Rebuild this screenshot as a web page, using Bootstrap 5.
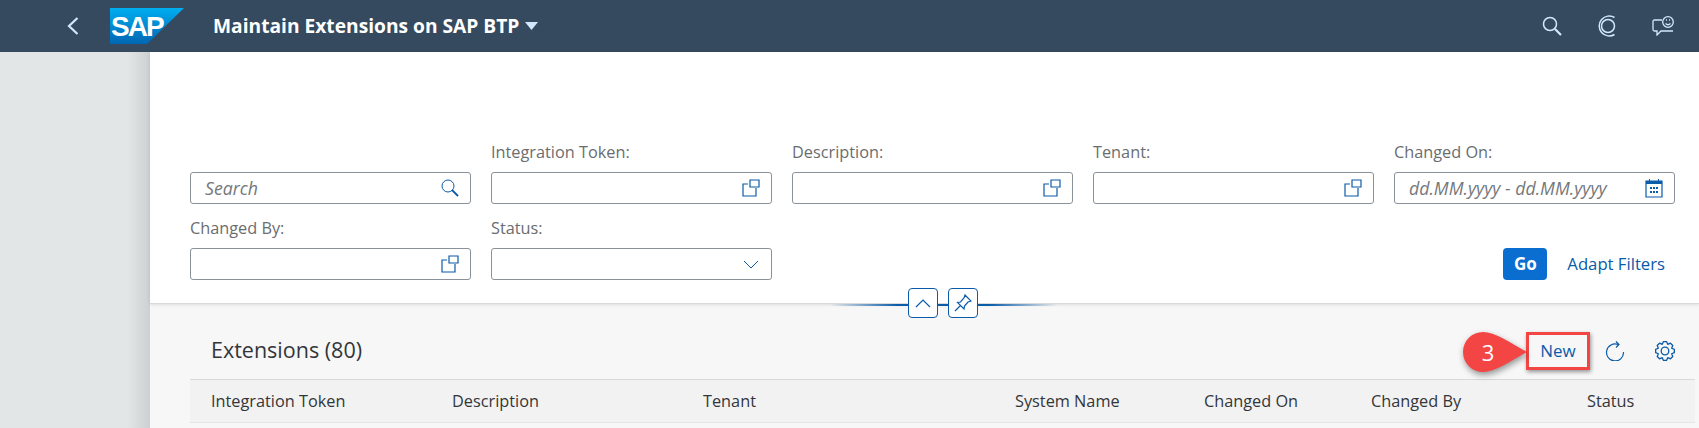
<!DOCTYPE html>
<html lang="en">
<head>
  <meta charset="UTF-8">
  <title>Maintain Extensions on SAP BTP</title>
  <link href="https://cdn.jsdelivr.net/npm/bootstrap@5.3.0/dist/css/bootstrap.min.css" rel="stylesheet">
  <style>
    html, body { height: 100%; overflow: hidden; }
    body { font-family: "Open Sans", "Liberation Sans", sans-serif; font-size: 16px; background: #f7f7f7; color: #32363a; }
    .shell-bar { height: 52px; background: #354a5f; padding: 0; }
    .shell-back { width: 12px; margin-left: 67px; margin-right: 31px; }
    .shell-title { color: #fff; font-size: 19.200px; font-weight: 700; margin-left: 29px; }
    .shell-caret { margin-left: 6px; }
    .shell-tools { margin-left: auto; margin-right: 25px; gap: 35px; }
    .side-rail { width: 150px; flex: none; background: linear-gradient(to right, #e3e6e6 85%, #ccd0d0); }
    .page-body { min-width: 0; }
    .filter-panel { height: 252px; background: #fff; padding: 76px 24px 0 40px; border-bottom: 1px solid #d9d9d9; box-shadow: 0 1px 3px rgba(0,0,0,.1); }
    .filter-grid { display: grid; grid-template-columns: repeat(5, 281px); column-gap: 20px; }
    .filter-cell { height: 76px; display: flex; flex-direction: column; justify-content: flex-end; }
    .filter-label { color: #6a6d70; font-size: 16.300px; line-height: 20px; margin-bottom: 10px; }
    .filter-box { height: 32px; border: 1px solid #89919a; border-radius: 3px; padding: 0 11px 0 14px; background: #fff; }
    .filter-hint { color: #74777a; font-style: italic; font-size: 17.700px; }
    .date-hint { white-space: nowrap; }
    .status-arrow { margin-right: 1px; }
    .filter-actions { grid-column: 3 / 6; align-self: end; height: 32px; }
    .go-btn { width: 44px; height: 32px; padding: 0; background: #0a6ed1; border: 0; border-radius: 4px; color: #fff; font-weight: 700; font-size: 17px; }
    .adapt-link { color: #0a5ba8; font-size: 16.700px; margin-left: 20px; margin-right: 10px; }
    .collapse-line { height: 0; position: relative; }
    .line-fade { position: absolute; left: 680px; top: 0; width: 227px; height: 2px; background: linear-gradient(to right, transparent, #0a5ba8 30%, #0a5ba8 70%, transparent); }
    .line-btn { position: absolute; top: -16px; width: 30px; height: 30px; background: #fff; border: 1px solid #0a5ba8; border-radius: 4px; padding: 0; }
    .table-zone { padding: 0 4px 0 40px; }
    .table-head { height: 75px; padding: 18px 20px 0 21px; }
    .table-name { font-size: 21.500px; color: #32363a; }
    .new-btn { position: relative; width: 64px; height: 38px; background: none; color: #0a5ba8; font-size: 17px; border: 3px solid #f44545; border-radius: 0; padding: 0; box-shadow: 1px 2px 4px rgba(0,0,0,.4); }
    .step-bubble { position: absolute; left: -66px; top: -3px; filter: drop-shadow(1px 3px 3px rgba(0,0,0,.4)); }
    .step-num { position: absolute; left: -66px; top: -3px; width: 50px; line-height: 40px; text-align: center; color: #fff; font-size: 22px; }
    .head-tools { gap: 30px; margin-left: 15px; }
    .ext-table { table-layout: fixed; width: 100%; margin: 0; }
    .ext-table th { background: #f2f2f2; height: 43px; padding: 0 0 0 21px; font-weight: 400; font-size: 16.300px; color: #32363a; border-top: 1px solid #d9d9d9; border-bottom: 1px solid #e5e5e5; vertical-align: middle; white-space: nowrap; }
  </style>
</head>
<body class="d-flex flex-column">
  <nav class="shell-bar d-flex align-items-center">
    <svg class="shell-back" viewBox="0 0 12 18" height="18"><path d="M10.500 1 2 9l8.500 8" fill="none" stroke="#d1e8ff" stroke-width="2.200"/></svg>
    <svg width="74" height="36" viewBox="0 0 74 36">
      <defs><linearGradient id="sapBlue" x1="0" y1="0" x2="0" y2="1"><stop offset="0" stop-color="#00aeef"/><stop offset="1" stop-color="#0066b3"/></linearGradient></defs>
      <path d="M0 0H74L37 36H0Z" fill="url(#sapBlue)"/>
      <text x="1" y="28" fill="#fff" font-family="Liberation Sans" font-weight="700" font-size="28" letter-spacing="-2">SAP</text>
    </svg>
    <span class="shell-title">Maintain Extensions on SAP BTP</span>
    <svg class="shell-caret" width="13" height="8" viewBox="0 0 13 8"><path d="M0 0H13L6.500 8Z" fill="#d1e8ff"/></svg>
    <div class="shell-tools d-flex align-items-center">
      <svg width="20" height="20" viewBox="0 0 20 20" fill="none" stroke="#d1e8ff"><circle cx="8" cy="8" r="6.500" stroke-width="1.500"/><path d="m13 13 6 6" stroke-width="2.200"/></svg>
      <svg width="20" height="22" viewBox="0 0 20 22" fill="none" stroke="#d1e8ff" stroke-width="1.500"><path d="M17.500 2.500A10 10 0 1 0 17.500 19.500"/><circle cx="11" cy="11" r="6.500"/></svg>
      <svg width="22" height="20" viewBox="0 0 22 20" fill="none" stroke="#d1e8ff" stroke-width="1.300"><path d="M10 4H2.500Q1 4 1 5.500V13.500Q1 15 2.500 15H5V19L9 15H21"/><circle cx="16" cy="6" r="5.300"/><path d="M13.500 7.500Q16 10 18.500 7.500M14 4h1M17 4h1"/></svg>
    </div>
  </nav>
  <div class="d-flex flex-grow-1">
    <aside class="side-rail"></aside>
    <main class="page-body flex-grow-1">
      <section class="filter-panel">
        <div class="filter-grid">
          <div class="filter-cell">
            <div class="filter-box d-flex align-items-center justify-content-between"><span class="filter-hint">Search</span>
              <svg width="18" height="18" viewBox="0 0 18 18" fill="none" stroke="#0a5ba8"><circle cx="7" cy="7" r="6"/><path d="m11 11 6 6" stroke-width="1.800"/></svg></div>
          </div>
          <div class="filter-cell"><label class="filter-label">Integration Token:</label>
            <div class="filter-box d-flex align-items-center justify-content-end"><svg width="18" height="18" viewBox="0 0 18 18" fill="none" stroke="#0a5ba8" stroke-width="1.200"><path d="M6 5H1V17H14V9M8 1H17V8H8Z"/></svg></div></div>
          <div class="filter-cell"><label class="filter-label">Description:</label>
            <div class="filter-box d-flex align-items-center justify-content-end"><svg width="18" height="18" viewBox="0 0 18 18" fill="none" stroke="#0a5ba8" stroke-width="1.200"><path d="M6 5H1V17H14V9M8 1H17V8H8Z"/></svg></div></div>
          <div class="filter-cell"><label class="filter-label">Tenant:</label>
            <div class="filter-box d-flex align-items-center justify-content-end"><svg width="18" height="18" viewBox="0 0 18 18" fill="none" stroke="#0a5ba8" stroke-width="1.200"><path d="M6 5H1V17H14V9M8 1H17V8H8Z"/></svg></div></div>
          <div class="filter-cell"><label class="filter-label">Changed On:</label>
            <div class="filter-box d-flex align-items-center justify-content-between"><span class="filter-hint date-hint">dd.MM.yyyy - dd.MM.yyyy</span>
              <svg width="18" height="20" viewBox="0 0 18 20" fill="#0a5ba8"><path d="M1 3H17V19H1Z" fill="none" stroke="#0a5ba8" stroke-width="1.200"/><path d="M1 3H17V6H1ZM4 1h1v3H4ZM13 1h1v3h-1ZM5 9h2v2H5ZM8 9h2v2H8ZM11 9h2v2h-2ZM5 13h2v2H5ZM8 13h2v2H8ZM11 13h2v2h-2Z"/></svg></div></div>
          <div class="filter-cell"><label class="filter-label">Changed By:</label>
            <div class="filter-box d-flex align-items-center justify-content-end"><svg width="18" height="18" viewBox="0 0 18 18" fill="none" stroke="#0a5ba8" stroke-width="1.200"><path d="M6 5H1V17H14V9M8 1H17V8H8Z"/></svg></div></div>
          <div class="filter-cell"><label class="filter-label">Status:</label>
            <div class="filter-box d-flex align-items-center justify-content-end"><svg class="status-arrow" width="16" height="9" viewBox="0 0 16 9" fill="none" stroke="#0a5ba8"><path d="m1 1 7 7 7-7"/></svg></div></div>
          <div class="filter-actions d-flex align-items-center justify-content-end">
            <button class="go-btn btn">Go</button><a class="adapt-link text-decoration-none" href="#">Adapt Filters</a>
          </div>
        </div>
      </section>
      <div class="collapse-line">
        <div class="line-fade"></div>
        <button class="line-btn d-flex align-items-center justify-content-center" style="left:758px"><svg width="16" height="9" viewBox="0 0 16 9" fill="none" stroke="#0a5ba8" stroke-width="1.200"><path d="m1 8 7-7 7 7"/></svg></button>
        <button class="line-btn d-flex align-items-center justify-content-center" style="left:798px"><svg width="18" height="18" viewBox="0 0 18 18" fill="none" stroke="#0a5ba8" stroke-width="1.200"><path d="M11 1 17 7 14 8 10.500 12 10 15 3.500 8.500 6.500 8 10 4ZM6.500 11.500 1 17"/></svg></button>
      </div>
      <section class="table-zone">
        <div class="table-head d-flex align-items-center">
          <span class="table-name">Extensions (80)</span>
          <button class="new-btn btn ms-auto"><svg class="step-bubble" width="66" height="44" viewBox="0 0 66 44"><path d="M20 0C32 0 46 10 64 20 46 30 32 40 20 40A20 20 0 0 1 20 0Z" fill="#f44545"/></svg><span class="step-num">3</span>New</button>
          <div class="head-tools d-flex align-items-center">
            <svg width="20" height="20" viewBox="0 0 20 20" fill="none" stroke="#0a5ba8" stroke-width="1.200"><path d="M13 3.500A8.500 8.500 0 1 0 18.500 11M11 .5l3 3-3 3"/></svg>
            <svg width="20" height="20" viewBox="0 0 20 20" fill="none" stroke="#0a5ba8" stroke-width="1.300" stroke-linejoin="round"><circle cx="10" cy="10" r="3.800"/><path d="M8.350.64H11.650L12.760 3.350 15.450 2.220 17.780 4.550 16.650 7.240 19.360 8.350V11.650L16.650 12.760 17.780 15.450 15.450 17.780 12.760 16.650 11.650 19.360H8.350L7.240 16.650 4.550 17.780 2.220 15.450 3.350 12.760.64 11.650V8.350L3.350 7.240 2.220 4.550 4.550 2.220 7.240 3.350Z"/></svg>
          </div>
        </div>
        <table class="ext-table table table-borderless">
          <colgroup><col style="width:241px"><col style="width:251px"><col style="width:312px"><col style="width:189px"><col style="width:167px"><col style="width:216px"><col></colgroup>
          <thead><tr><th>Integration Token</th><th>Description</th><th>Tenant</th><th>System Name</th><th>Changed On</th><th>Changed By</th><th>Status</th></tr></thead>
        </table>
      </section>
    </main>
  </div>
  <script src="https://cdn.jsdelivr.net/npm/bootstrap@5.3.0/dist/js/bootstrap.bundle.min.js"></script>
</body>
</html>
